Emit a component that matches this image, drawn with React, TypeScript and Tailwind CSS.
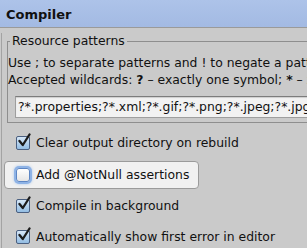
import * as React from "react";

type CheckProps = {
  label: string;
  checked: boolean;
  focused?: boolean;
};

const CheckMark = () => (
  <svg width="15" height="15" viewBox="0 0 15 15" className="absolute left-[0px] top-[-4px]">
    <path d="M2.5 8 L5.8 12 L12.5 1.5" fill="none" stroke="#1b1b1b" strokeWidth="2.3" strokeLinecap="round" strokeLinejoin="round" />
  </svg>
);

const CheckBox = ({ checked }: { checked: boolean }) => (
  <div
    className={
      checked
        ? "relative w-[14px] h-[14px] rounded-[2px] border border-[#4a5f80] bg-gradient-to-b from-[#d6e7f7] to-[#93bde3]"
        : "relative w-[14px] h-[14px] rounded-[3px] border border-[#5d86c4] bg-gradient-to-b from-[#ffffff] to-[#e6e6e6] shadow-[0_0_0_2px_#8eb3e6,0_0_3px_2px_#a9c6ec]"
    }
  >
    {checked && <CheckMark />}
  </div>
);

const CheckRow = ({ label, checked, focused }: CheckProps) => {
  if (focused) {
    return (
      <div className="ml-[2px] w-[195px] h-[28px] flex items-center gap-[6px] pl-[11px] rounded-[4px] border border-[#9b9b9b] bg-[#f1f1f1]">
        <CheckBox checked={checked} />
        <span>{label}</span>
      </div>
    );
  }
  return (
    <div className="h-[30px] flex items-center gap-[6px] pl-[14px]">
      <CheckBox checked={checked} />
      <span>{label}</span>
    </div>
  );
};

export default function App() {
  return (
    <div
      className="w-[307px] h-[248px] overflow-hidden bg-[#cacaca] text-[#111111] text-[12.4px] leading-[16px]"
      style={{ fontFamily: '"DejaVu Sans", "Liberation Sans", sans-serif' }}
    >
      {/* title */}
      <div className="h-[28px] flex items-center pt-[2px] px-[6px] border-b border-[#9a9a9a] bg-gradient-to-b from-[#adc3e9] to-[#a3bae3]">
        <span className="font-bold text-[13px]">Compiler</span>
      </div>

      <div className="ml-[1px] border-l border-[#a3a3a3] h-[220px]">
        {/* resource patterns group */}
        <fieldset className="ml-[5px] mt-[5px] w-[330px] border border-[#8e8e8e] pb-[4px]">
          <legend className="ml-[2px] px-[2px]">Resource patterns</legend>
          <div className="whitespace-nowrap mt-[6px]">
            Use ; to separate patterns and ! to negate a pattern.
          </div>
          <div className="whitespace-nowrap mt-[1px]">
            Accepted wildcards: <b>?</b> – exactly one symbol; <b>*</b> – zero or more symbols; <b>/</b> – path separator
          </div>
          <div className="ml-[7px] mt-[8px] h-[22px] flex items-center pl-[2px] border border-[#9e9e9e] border-t-[#7c7c7c] bg-[#f2f2f2] shadow-[inset_0_1px_1px_rgba(0,0,0,0.15)] whitespace-nowrap">
            ?*.properties;?*.xml;?*.gif;?*.png;?*.jpeg;?*.jpg;?*.html;?*.dtd;?*.tld;?*.ftl
          </div>
        </fieldset>

        <div className="mt-[5px]">
          <CheckRow label="Clear output directory on rebuild" checked />
        </div>
        <div className="mt-[3px]">
          <CheckRow label="Add @NotNull assertions" checked={false} focused />
        </div>
        <div className="mt-[2px]">
          <CheckRow label="Compile in background" checked />
        </div>
        <div className="mt-[1px]">
          <CheckRow label="Automatically show first error in editor" checked />
        </div>
      </div>
    </div>
  );
}
